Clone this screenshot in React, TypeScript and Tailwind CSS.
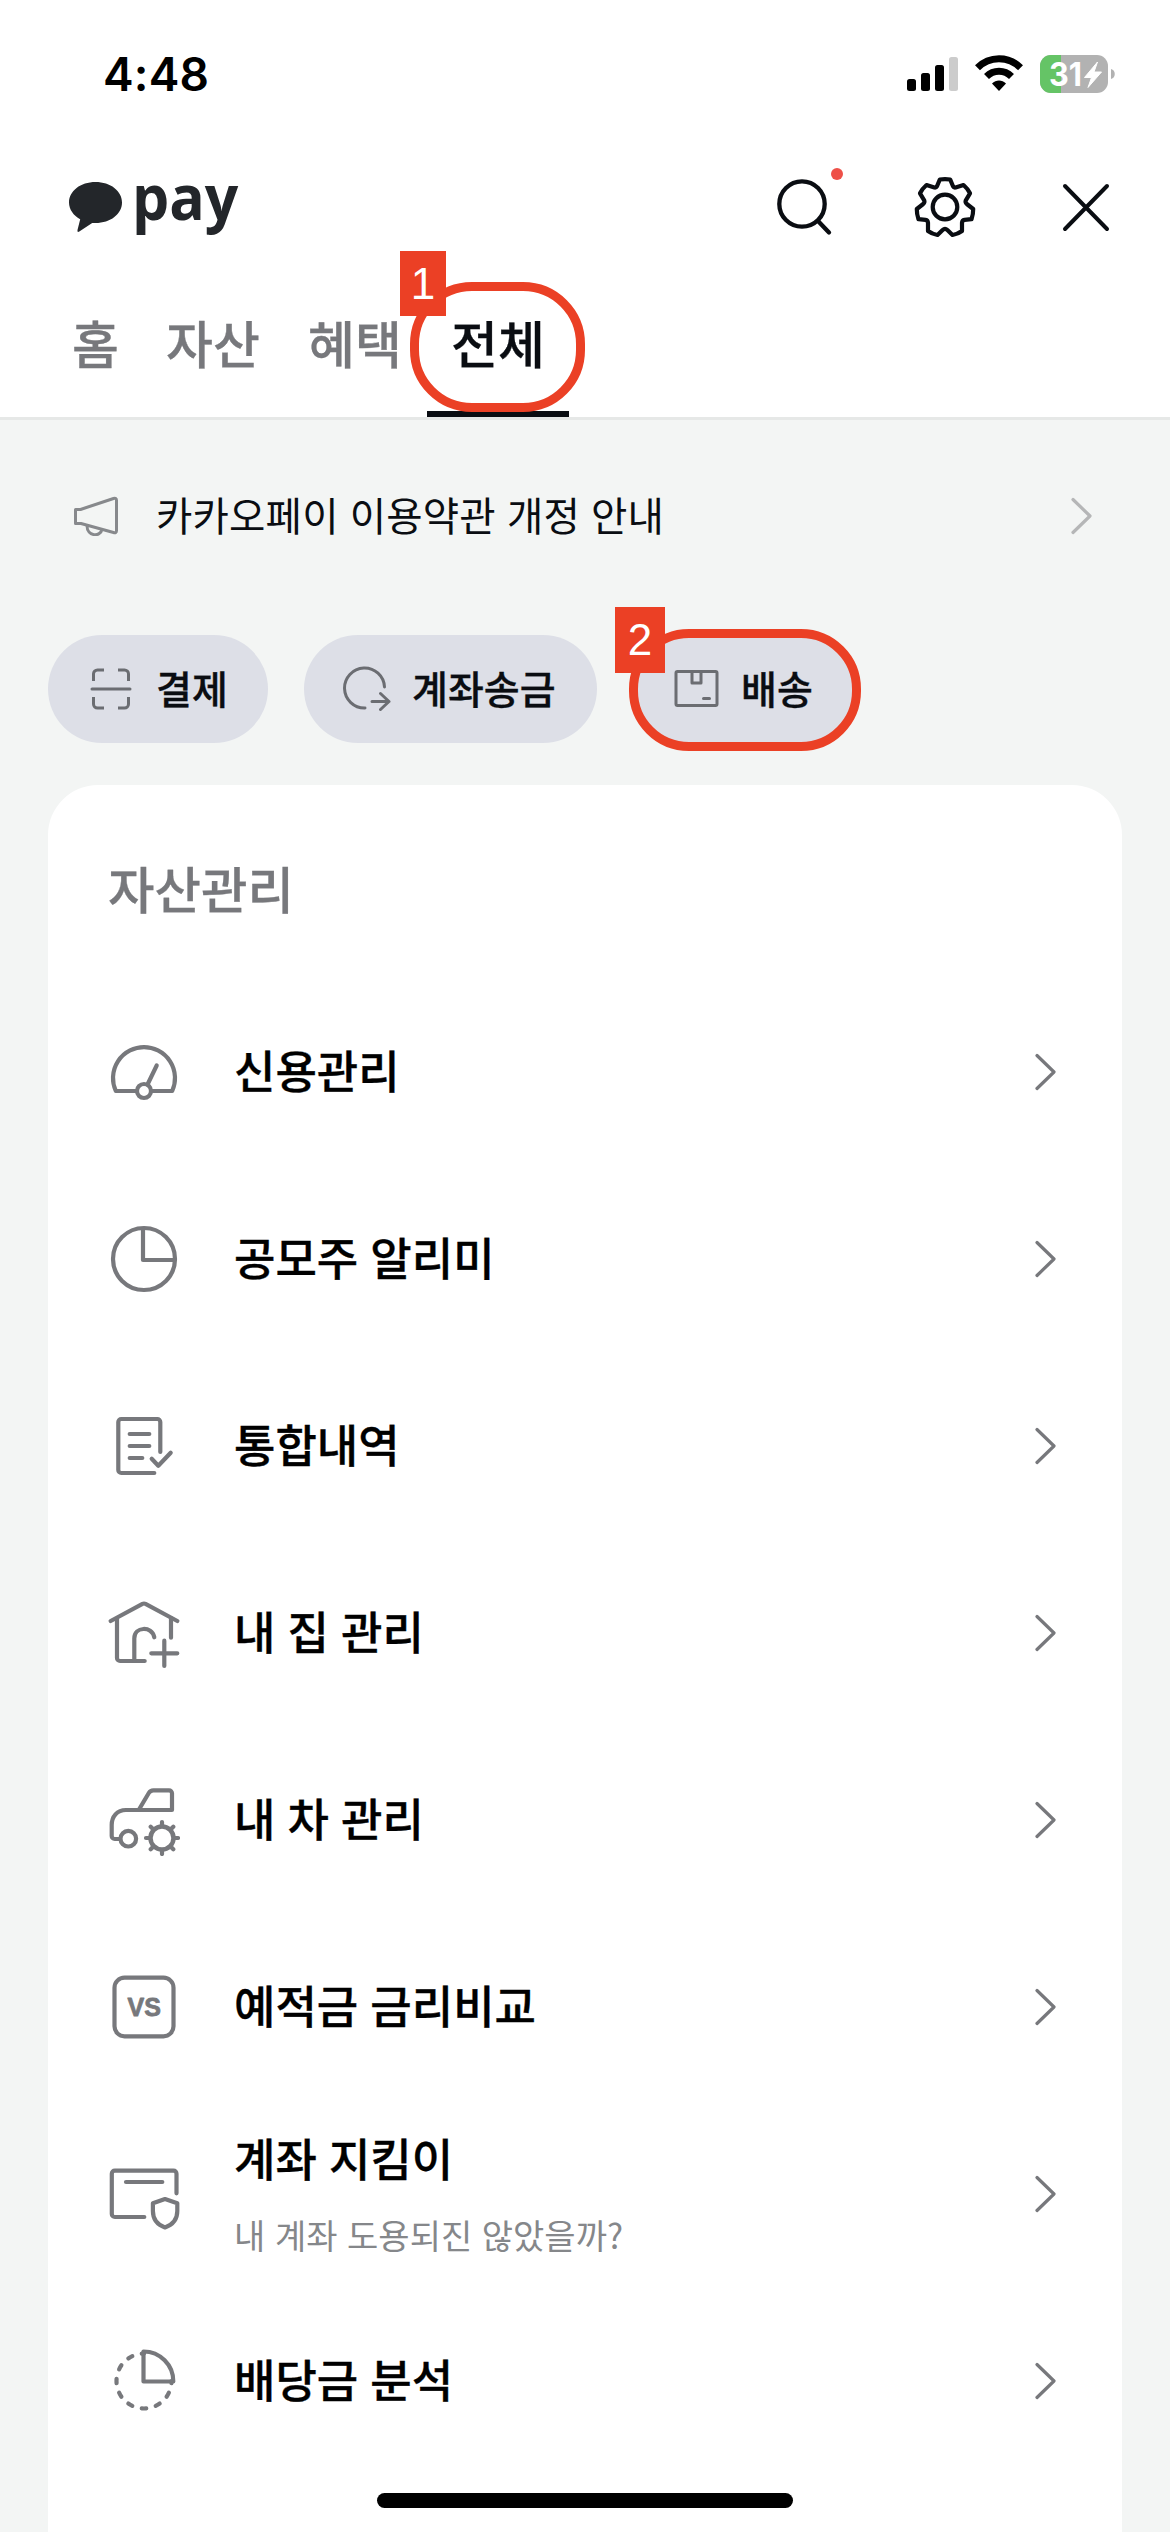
import type { ReactNode } from 'react';
import { clsx } from 'clsx';

interface MenuItem {
  title: string;
  description?: string;
  icon: ReactNode;
}

function LineIcon({ children }: { children: ReactNode }) {
  return (
    <svg
      viewBox="0 0 72 72"
      className="h-[72px] w-[72px] shrink-0 text-[#77787c]"
      fill="none"
      stroke="currentColor"
      strokeWidth="4.2"
      strokeLinecap="round"
      strokeLinejoin="round"
    >
      {children}
    </svg>
  );
}

const MENU_ITEMS: MenuItem[] = [
  {
    title: '신용관리',
    icon: (
      <>
        <path d="M28.5 55H7.8a31 31 0 1 1 56.4 0H43.5" />
        <circle cx="36" cy="55" r="7" />
        <path d="M39.5 48.5l9.2-19" />
      </>
    ),
  },
  {
    title: '공모주 알리미',
    icon: (
      <>
        <circle cx="36" cy="36" r="31" />
        <path d="M35 6v31h31" />
      </>
    ),
  },
  {
    title: '통합내역',
    icon: (
      <>
        <path d="M46.3 63h-33a3 3 0 0 1-3-3V12a3 3 0 0 1 3-3h36a3 3 0 0 1 3 3v30" />
        <path d="M21.7 24h19.6M21.7 36h19.6M21.7 48h12.6M43.7 48.7l6.6 7 12.4-13" />
      </>
    ),
  },
  {
    title: '내 집 관리',
    icon: (
      <>
        <path d="M2.7 24L34.5 6.9q1.5-.8 3 0L69.3 24" />
        <path d="M9 21.5V61a3 3 0 0 0 3 3h24.7M63 21v19.7" />
        <path d="M26.3 64V41.5c0-12 17.5-13 20-1.2M43.3 56.3h26M56.3 43.7V69" />
      </>
    ),
  },
  {
    title: '내 차 관리',
    icon: (
      <>
        <path d="M31.3 25L40.8 9q1.6-2.7 4.5-2.7H61a3 3 0 0 1 3 3V26H18C9 26 3.7 32.5 3.7 41v11a3 3 0 0 0 3 3h5" />
        <circle cx="20.3" cy="54.7" r="7.8" />
        <circle cx="54" cy="54" r="11.5" strokeWidth="4.5" />
        <path d="M54 42v-4M54 70v-4M42 54h-4M70 54h-4M45.5 45.5l-2.8-2.8M62.5 45.5l2.8-2.8M45.5 62.5l-2.8 2.8M62.5 62.5l2.8 2.8" />
      </>
    ),
  },
  {
    title: '예적금 금리비교',
    icon: (
      <>
        <rect x="6.5" y="6.7" width="59" height="58.6" rx="10" />
        <text
          x="36.3"
          y="45.3"
          textAnchor="middle"
          fill="currentColor"
          strokeWidth="0.8"
          className="font-['Liberation_Sans',sans-serif] text-[25px] font-bold"
        >
          VS
        </text>
      </>
    ),
  },
  {
    title: '계좌 지킴이',
    description: '내 계좌 도용되진 않았을까?',
    icon: (
      <>
        <path d="M36.3 59H6.8a3 3 0 0 1-3-3V15.7a3 3 0 0 1 3-3h58.7a3 3 0 0 1 3 3v19.6M18 24h36.3" />
        <path d="M57 41l12.3 4.2V53c0 9-4.5 13.7-12.3 16.4C49.2 66.7 44.9 62 44.9 53v-7.8z" />
      </>
    ),
  },
  {
    title: '배당금 분석',
    icon: (
      <>
        <path d="M35.5 6.5A29.8 29.8 0 0 1 65.3 36.5H35.5z" />
        <path
          d="M63.5 36A27.5 27.5 0 1 1 36 8.5"
          pathLength="90"
          strokeDasharray="3.2 6.8"
          strokeDashoffset="1.6"
        />
      </>
    ),
  },
];

const TABS = [
  { label: '홈', className: 'w-[44px]' },
  { label: '자산', className: 'ml-[50px] w-[94px]' },
  { label: '혜택', className: 'ml-[48px] w-[94px]' },
];

function Chevron({ className }: { className?: string }) {
  return (
    <svg
      viewBox="0 0 22 38"
      className={clsx('h-[38px] w-[22px] shrink-0', className)}
      fill="none"
      stroke="currentColor"
      strokeWidth="3.2"
      strokeLinecap="round"
      strokeLinejoin="round"
    >
      <path d="M2 2.5L19 19 2 35.5" />
    </svg>
  );
}

function StatusBar() {
  return (
    <div className="flex h-[150px] items-start justify-between pt-[54px] pr-[54px] pl-[103px]">
      <span className="font-['Inter',sans-serif] text-[46px] leading-[40px] font-semibold tracking-[0.2px] text-black">
        4:48
      </span>
      <svg viewBox="0 0 210 40" className="h-[40px] w-[210px]">
        <rect x="1" y="25" width="9" height="12" rx="2.5" />
        <rect x="15" y="19" width="9" height="18" rx="2.5" />
        <rect x="29" y="11" width="9" height="26" rx="2.5" />
        <rect x="43" y="3" width="9" height="34" rx="2.5" fill="#ccc" />
        <path d="M93 37l-7-7.5c4-4 10-4 14 0z" />
        <g fill="none" stroke="#000" strokeWidth="7">
          <path d="M80.5 22.5c7-7 18-7 25 0" />
          <path d="M71.5 13.7c12-12 31-12 43 0" />
        </g>
        <rect x="134" y="1" width="68" height="38" rx="11" fill="#b2b2b2" />
        <path d="M145 1h10v38h-10a11 11 0 0 1-11-11V12a11 11 0 0 1 11-11z" fill="#65c466" />
        <path d="M205 15c5 1 5 9 0 10z" fill="#b2b2b2" />
        <text
          x="143"
          y="32"
          fill="#fff"
          textLength="33"
          lengthAdjust="spacingAndGlyphs"
          className="font-['Inter',sans-serif] text-[33px] font-bold"
        >
          31
        </text>
        <path d="M191.5 8L178.500 23.500h7L182 33.500 195.500 18H188z" fill="#fff" stroke="#fff" strokeLinejoin="round" />
      </svg>
    </div>
  );
}

function TitleBar() {
  return (
    <div className="flex h-[132px] items-start justify-between pr-[54px] pl-[68px]">
      <div className="flex items-start text-[#23262a]">
        <svg viewBox="0 0 56 56" className="mt-[30px] h-[56px] w-[56px]" fill="currentColor">
          <path d="M27.5 2C42.5 2 54 11 54 22.5S42.5 43 27.5 43h-3.3L11.3 51.6q-2.3 1.2-1.8-1.5l2.7-10.8C5.5 35.5 1 29.5 1 22.5 1 11 12.5 2 27.5 2z" />
        </svg>
        <span className="mt-[14px] ml-[8px] origin-left scale-x-[0.95] font-['Open_Sans',sans-serif] text-[62px] leading-[64px] font-bold">
          pay
        </span>
      </div>
      <div className="flex items-center pt-[17px] text-[#0a0d12]">
        <svg viewBox="0 0 80 80" className="h-[80px] w-[80px]" fill="none" stroke="currentColor" strokeWidth="4.3" strokeLinecap="round">
          <circle cx="33" cy="37" r="22.7" />
          <path d="M49.5 54.5L60 65.5" />
          <circle cx="68" cy="7" r="6" fill="#ee5048" stroke="none" />
        </svg>
        <svg viewBox="-40 -40 80 80" className="ml-[56px] h-[80px] w-[80px]" fill="none" stroke="currentColor" strokeWidth="4.2" strokeLinejoin="round">
          <path d="M-5.2-27.5Q0-28.4 5.2-27.5L8-20.7Q8.8-19.2 10.6-19.5L18.5-22Q22.5-18.6 25-13.7L20.8-6.7Q20-4.5 21.8-3L28.2 2Q28.3 7 26.5 12.2L19.5 12.9Q17.2 13.4 17 15.7V24Q13 27 7.5 28L2.4 23Q0 20.8-2.4 23L-7.5 28Q-13 27-17 24V15.7Q-17.2 13.4-19.5 12.9L-26.5 12.2Q-28.3 7-28.2 2L-21.8-3Q-20-4.5-20.8-6.7L-25-13.7Q-22.5-18.6-18.5-22L-10.6-19.5Q-8.8-19.2-8-20.7Z" />
          <circle r="12.3" />
        </svg>
        <svg viewBox="0 0 60 80" className="ml-[71px] h-[80px] w-[60px]" fill="none" stroke="currentColor" strokeWidth="4" strokeLinecap="round">
          <path d="M9 19l42 43M51 19L9 62" />
        </svg>
      </div>
    </div>
  );
}

function Marker({ className, children }: { className: string; children: ReactNode }) {
  return (
    <span
      className={clsx(
        "absolute flex items-center justify-center bg-[#eb4025] font-['Liberation_Sans',sans-serif] text-[44px] leading-none font-normal text-white [-webkit-text-stroke:0]",
        className
      )}
    >
      {children}
    </span>
  );
}

function Tabs() {
  return (
    <div className="flex h-[135px] pl-[72px] text-[51px] leading-[60px] font-medium whitespace-nowrap [-webkit-text-stroke:0.3px]">
      {TABS.map((tab) => (
        <span key={tab.label} className={clsx('shrink-0 pt-[30px] text-[#77787c]', tab.className)}>
          {tab.label}
        </span>
      ))}
      <div className="relative ml-[25px] h-full w-[142px] border-b-[6px] border-[#0a0d12] pt-[30px] text-center text-[#0a0d12]">
        전체
        <div className="absolute top-0 -left-[17px] h-[130px] w-[175px] rounded-[62px] border-[9px] border-[#eb4025]" />
        <Marker className="-top-[31px] -left-[27px] h-[65px] w-[46px]">1</Marker>
      </div>
    </div>
  );
}

function Notice() {
  return (
    <div className="flex h-[116px] items-end pr-[77px] pl-[73px]">
      <svg viewBox="0 0 48 44" className="h-[44px] w-[48px] text-[#87898c]" fill="none" stroke="currentColor" strokeWidth="3" strokeLinejoin="round">
        <path d="M2.5 17.5h5L40.5 6.500q3-1 3 2V38.500q0 3-3 2L8 31.500H2.5z" />
        <path d="M14 33.500c0 11.500 13.500 11.500 15 4" />
      </svg>
      <p className="ml-[35px] flex-1 text-[39.5px] leading-[44px] font-normal tracking-[0.2px] text-[#0a0d12] [word-spacing:2px]">
        카카오페이 이용약관 개정 안내
      </p>
      <Chevron className="mb-px text-[#b5b6b7]" />
    </div>
  );
}

function ChipIcon({ children }: { children: ReactNode }) {
  return (
    <svg
      viewBox="0 0 48 48"
      className="h-[48px] w-[48px] shrink-0 text-[#6b6d72]"
      fill="none"
      stroke="currentColor"
      strokeWidth="3"
      strokeLinecap="round"
      strokeLinejoin="round"
    >
      {children}
    </svg>
  );
}

function Chips() {
  return (
    <div className="mt-[99px] flex h-[108px] gap-[36px] pl-[48px] text-[39px] leading-[48px] font-medium whitespace-nowrap text-[#0a0d12] [-webkit-text-stroke:0.35px]">
      <div className="flex w-[220px] items-center rounded-full bg-[#dddfe7] pl-[39px]">
        <ChipIcon>
          <path
            strokeLinecap="butt"
            d="M6.5 16V9a4 4 0 0 1 4-4H17M31 5h6.5a4 4 0 0 1 4 4v7M41.5 32v7a4 4 0 0 1-4 4H31M17 43h-6.5a4 4 0 0 1-4-4v-7"
          />
          <path d="M5 24h38" />
        </ChipIcon>
        <span className="mb-[4px] ml-[21px]">결제</span>
      </div>
      <div className="flex w-[293px] items-center rounded-full bg-[#dddfe7] pl-[39px]">
        <ChipIcon>
          <path d="M22 43A20 20 0 1 1 41.5 22M29 36.5h17M37.5 28.5l8.5 8-8.5 8" />
        </ChipIcon>
        <span className="mb-[4px] ml-[21px]">계좌송금</span>
      </div>
      <div className="relative flex w-[224px] items-center rounded-full bg-[#dddfe7] pl-[39px]">
        <ChipIcon>
          <rect x="4" y="6.5" width="41" height="34" rx="1.5" />
          <path d="M20 7v11h9V7M31.5 33.5h6" />
        </ChipIcon>
        <span className="mb-[4px] ml-[21px]">배송</span>
        <div className="absolute -top-[6px] -left-[4px] h-[122px] w-[232px] rounded-[60px] border-[9px] border-[#eb4025]" />
        <Marker className="-top-[28px] -left-[18px] h-[66px] w-[50px]">2</Marker>
      </div>
    </div>
  );
}

export default function App() {
  return (
    <div className="relative h-[2532px] w-[1170px] overflow-hidden bg-[#f3f5f4] font-['Noto_Sans_CJK_KR',sans-serif]">
      <header className="h-[420px] border-b-[3px] border-[#e6e8e7] bg-white">
        <StatusBar />
        <TitleBar />
        <Tabs />
      </header>

      <Notice />
      <Chips />

      <section className="mx-[48px] mt-[42px] h-[1800px] rounded-t-[50px] bg-white pt-[72px]">
        <h2 className="pl-[60px] text-[50.5px] leading-[60px] font-medium text-[#77787c] [-webkit-text-stroke:0.3px]">
          자산관리
        </h2>
        <ul className="mt-[61px]">
          {MENU_ITEMS.map((item) => (
            <li key={item.title} className="flex h-[187px] items-center pr-[65px] pl-[60px]">
              <LineIcon>{item.icon}</LineIcon>
              <div className={clsx('ml-[54px] flex-1 [word-spacing:2px]', !item.description && 'pb-[4px]')}>
                <p className="text-[45px] leading-[60px] font-medium text-black [-webkit-text-stroke:0.35px]">
                  {item.title}
                </p>
                {item.description && (
                  <p className="mt-[22px] text-[34px] leading-[50px] font-normal text-[#85878a]">
                    {item.description}
                  </p>
                )}
              </div>
              <Chevron className="text-[#77787c]" />
            </li>
          ))}
        </ul>
      </section>

      {/* Home indicator */}
      <div className="absolute bottom-[24px] left-[377px] h-[15px] w-[416px] rounded-full bg-black" />
    </div>
  );
}
